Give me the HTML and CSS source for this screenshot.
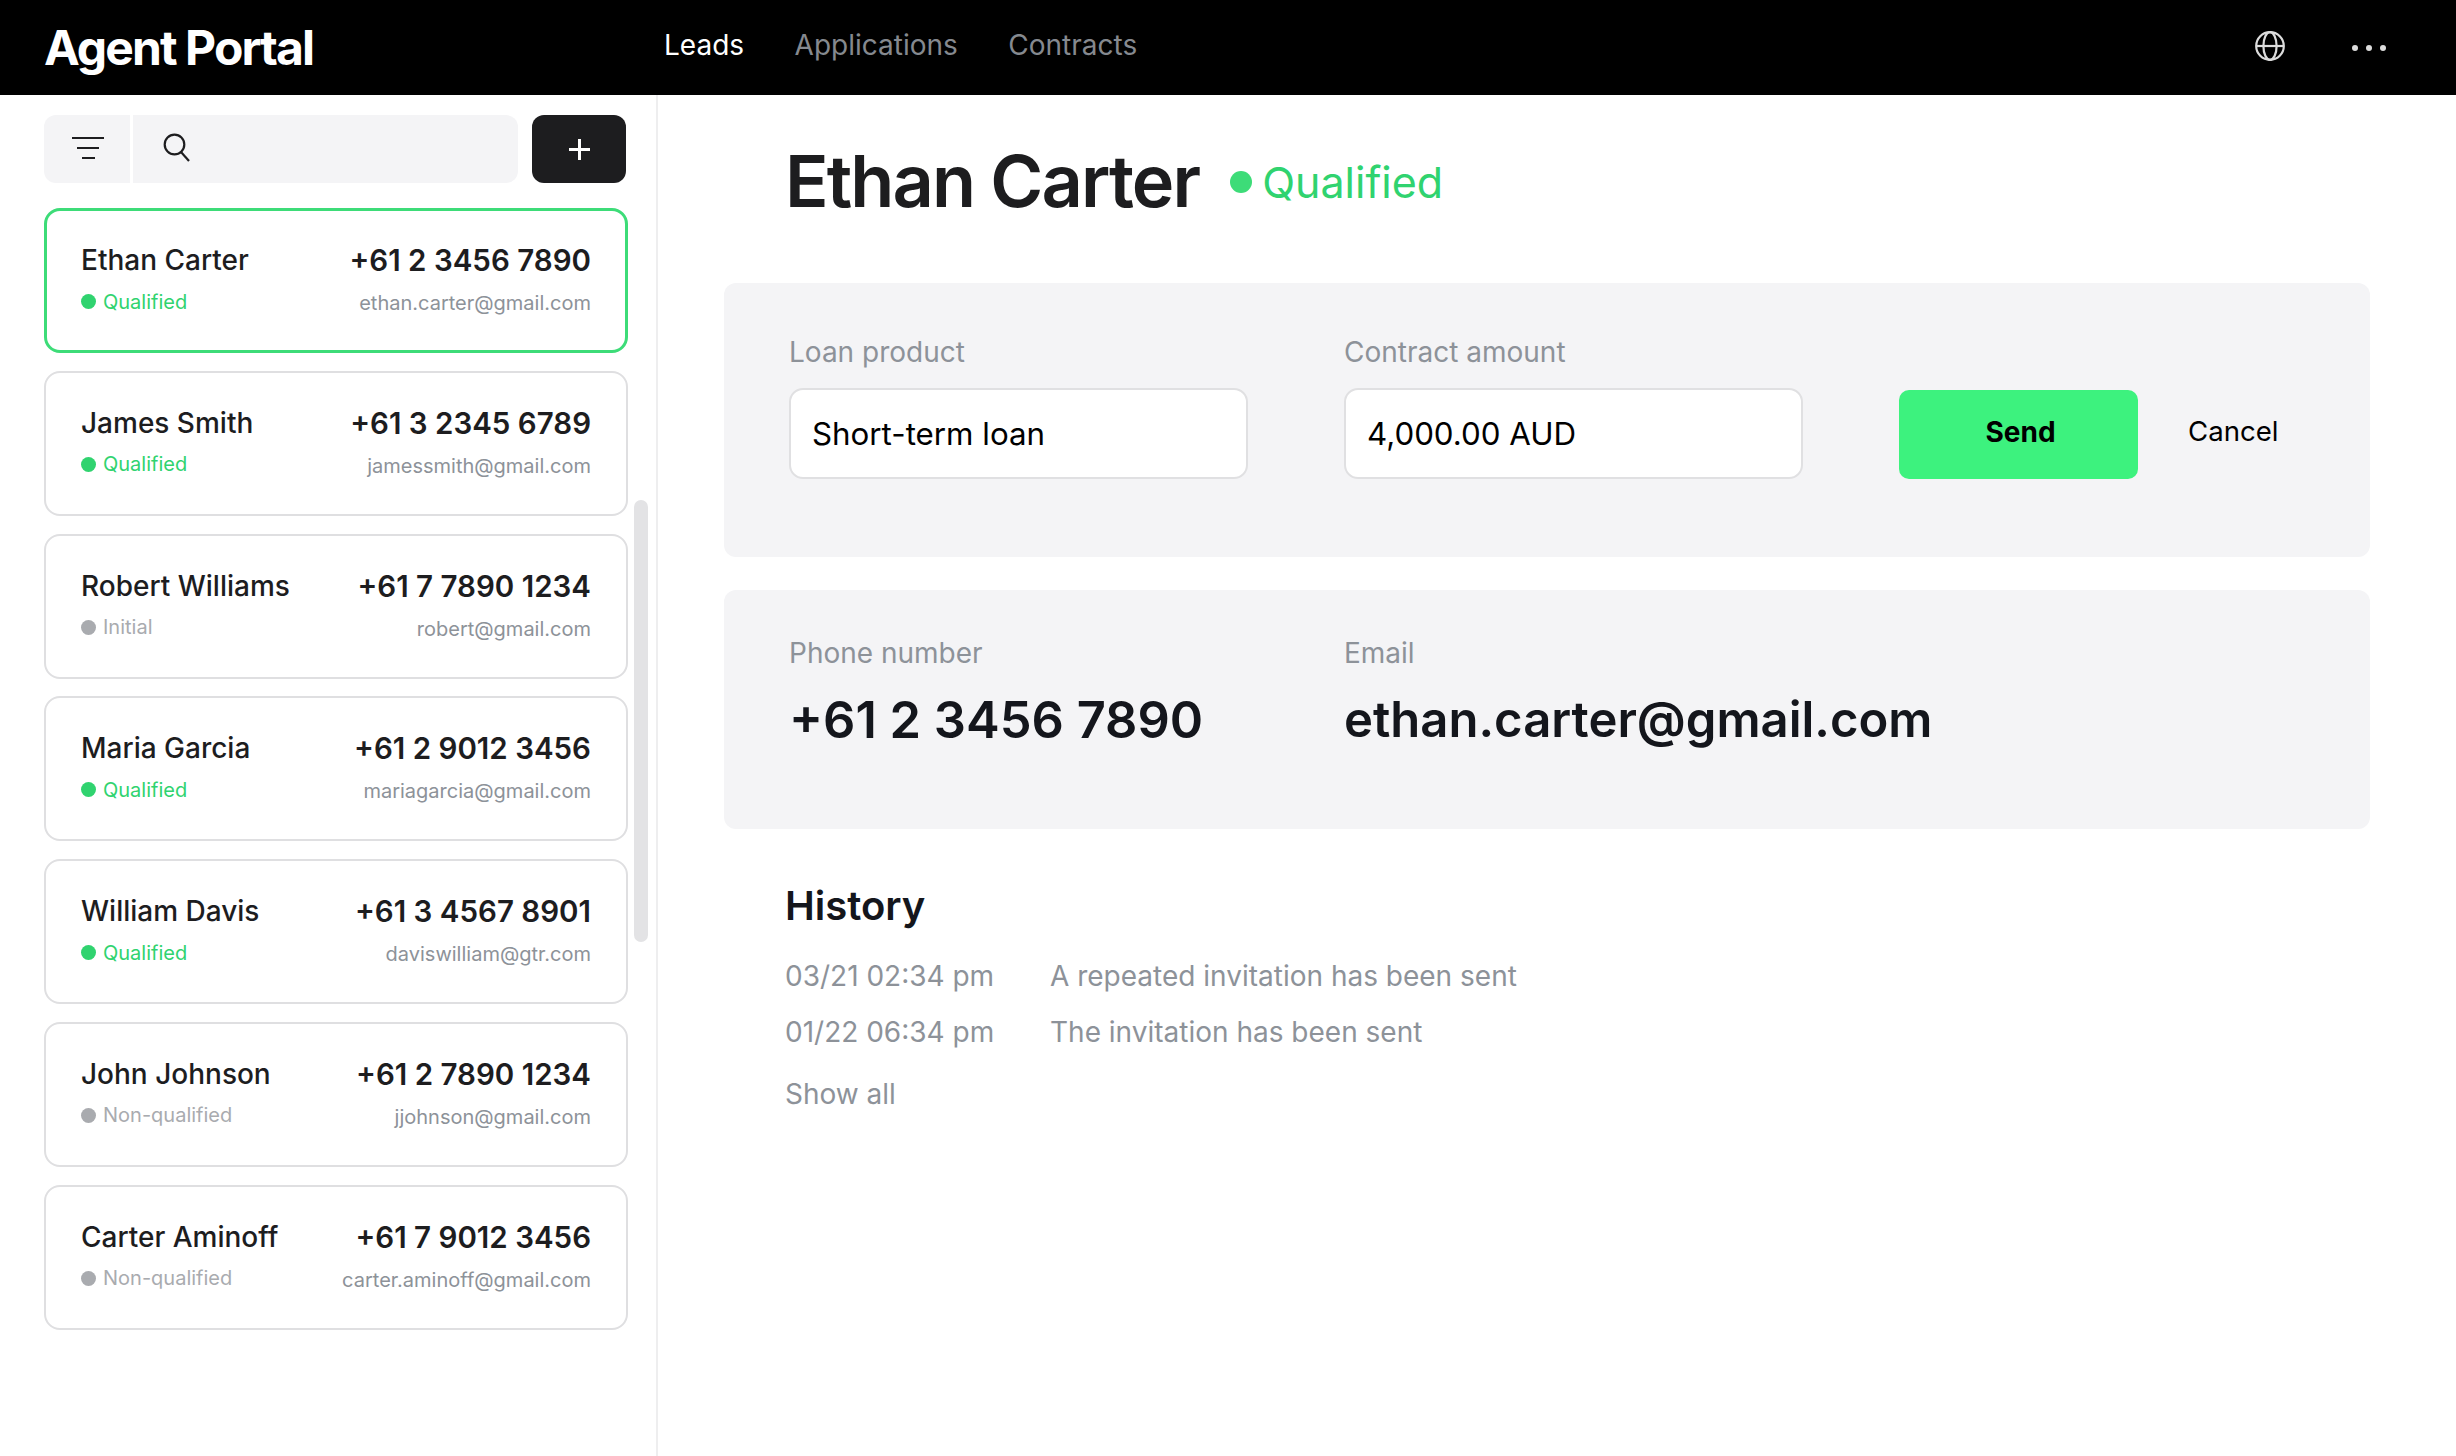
FILE: index.html
```html
<!DOCTYPE html>
<html>
    <head>
        <meta charset="utf-8">
        <title>Agent Portal</title>
        <link rel="stylesheet" href="styles.css">
    </head>
    <body>
    <header class="topbar">
        <div class="logo">Agent Portal</div>
        <nav class="nav">
            <a class="nav-item active">Leads</a>
            <a class="nav-item">Applications</a>
            <a class="nav-item">Contracts</a>
        </nav>
        <div class="top-icons">
            <svg class="globe" width="30" height="30" viewBox="0 0 30 30" fill="none" stroke="#dcdcdc" stroke-width="2.2">
                <circle cx="15" cy="15" r="13.8"/>
                <ellipse cx="15" cy="15" rx="6.6" ry="13.8"/>
                <path d="M1 15h28"/>
            </svg>
            <div class="dots"><span></span><span></span><span></span></div>
        </div>
    </header>
    <div class="layout">
        <aside class="sidebar">
            <div class="tools">
                <button class="filter">
                    <svg class="tool-icon" width="32" height="24" viewBox="0 0 32 24" fill="none" stroke="#1d1d1f" stroke-width="2.2">
                        <path d="M0 2h32M5 12h22M10 22h13"/>
                    </svg>
                </button>
                <div class="search">
                    <svg class="tool-icon" width="28" height="30" viewBox="0 0 28 30" fill="none" stroke="#1d1d1f" stroke-width="2.2">
                        <circle cx="11.5" cy="11.5" r="9.8"/>
                        <path d="M18 19l8 9"/>
                    </svg>
                </div>
                <button class="add">
                    <svg width="21" height="21" viewBox="0 0 21 21" fill="none" stroke="#fff" stroke-width="3">
                        <path d="M10.5 0v21M0 10.5h21"/>
                    </svg>
                </button>
            </div>
            <div class="cards">
                <div class="card selected">
                    <div class="row"><span class="name">Ethan Carter</span><span class="phone">+61 2 3456 7890</span></div>
                    <div class="row row2"><span class="state green">Qualified</span><span class="mail">ethan.carter@gmail.com</span></div>
                </div>
                <div class="card">
                    <div class="row"><span class="name">James Smith</span><span class="phone">+61 3 2345 6789</span></div>
                    <div class="row row2"><span class="state green">Qualified</span><span class="mail">jamessmith@gmail.com</span></div>
                </div>
                <div class="card">
                    <div class="row"><span class="name">Robert Williams</span><span class="phone">+61 7 7890 1234</span></div>
                    <div class="row row2"><span class="state grey">Initial</span><span class="mail">robert@gmail.com</span></div>
                </div>
                <div class="card">
                    <div class="row"><span class="name">Maria Garcia</span><span class="phone">+61 2 9012 3456</span></div>
                    <div class="row row2"><span class="state green">Qualified</span><span class="mail">mariagarcia@gmail.com</span></div>
                </div>
                <div class="card">
                    <div class="row"><span class="name">William Davis</span><span class="phone">+61 3 4567 8901</span></div>
                    <div class="row row2"><span class="state green">Qualified</span><span class="mail">daviswilliam@gtr.com</span></div>
                </div>
                <div class="card">
                    <div class="row"><span class="name">John Johnson</span><span class="phone">+61 2 7890 1234</span></div>
                    <div class="row row2"><span class="state grey">Non-qualified</span><span class="mail">jjohnson@gmail.com</span></div>
                </div>
                <div class="card">
                    <div class="row"><span class="name">Carter Aminoff</span><span class="phone">+61 7 9012 3456</span></div>
                    <div class="row row2"><span class="state grey">Non-qualified</span><span class="mail">carter.aminoff@gmail.com</span></div>
                </div>
            </div>
            <div class="scroll-thumb"></div>
        </aside>
        <main class="main">
            <div class="title">
                <h1>Ethan Carter</h1>
                <span class="title-state">Qualified</span>
            </div>
            <section class="panel form-panel">
                <div class="field">
                    <div class="label">Loan product</div>
                    <div class="input">Short-term loan</div>
                </div>
                <div class="field">
                    <div class="label">Contract amount</div>
                    <div class="input">4,000.00 AUD</div>
                </div>
                <button class="send">Send</button>
                <a class="cancel">Cancel</a>
            </section>
            <section class="panel info-panel">
                <div class="info">
                    <div class="label">Phone number</div>
                    <div class="value phone-value">+61 2 3456 7890</div>
                </div>
                <div class="info">
                    <div class="label">Email</div>
                    <div class="value">ethan.carter@gmail.com</div>
                </div>
            </section>
            <section class="history">
                <h2>History</h2>
                <div class="event"><span class="time">03/21 02:34 pm</span><span>A repeated invitation has been sent</span></div>
                <div class="event"><span class="time">01/22 06:34 pm</span><span>The invitation has been sent</span></div>
                <a class="show-all">Show all</a>
            </section>
        </main>
    </div>
    </body>
</html>
```

FILE: styles.css
```css
*{
    box-sizing: border-box;
}
body{
    margin: 0;
    height: 1456px;
    overflow: hidden;
    background: #fff;
    color: #1d1d1f;
    font-family: Inter, "Liberation Sans", sans-serif;
}
.topbar{
    height: 95px;
    background: #000;
    display: flex;
    align-items: center;
    padding: 0 44px;
}
.logo{
    width: 620px;
    color: #fff;
    font-size: 48px;
    font-weight: 700;
    letter-spacing: -1.9px;
}
.nav{
    display: flex;
    gap: 50.5px;
    margin-top: -6px;
}
.nav-item{
    color: #85898f;
    font-size: 28px;
}
.nav-item.active{
    color: #fff;
}
.top-icons{
    margin-left: auto;
    display: flex;
    align-items: center;
    gap: 67px;
    padding-right: 26px;
}
.globe{
    display: block;
    margin-top: -4px;
}
.dots{
    display: flex;
    gap: 8px;
}
.dots span{
    width: 6px;
    height: 6px;
    border-radius: 50%;
    background: #dcdcdc;
}
.layout{
    display: flex;
    height: 1361px;
}
.sidebar{
    position: relative;
    width: 658px;
    flex-shrink: 0;
    border-right: 2px solid #eeeeef;
    padding: 20px 0 0 44px;
}
.tools{
    display: flex;
    width: 583px;
    height: 68px;
}
.tool-icon{
    margin-bottom: 3px;
}
.filter{
    width: 86px;
    border: 0;
    background: #f4f4f6;
    border-radius: 12px 0 0 12px;
    padding: 0 0 0 2px;
    display: flex;
    align-items: center;
    justify-content: center;
}
.search{
    width: 385px;
    margin-left: 3px;
    background: #f4f4f6;
    border-radius: 0 12px 12px 0;
    padding: 0 0 0 30px;
    display: flex;
    align-items: center;
}
.add{
    width: 94px;
    margin-left: 14px;
    border: 0;
    background: #1d1d1f;
    border-radius: 12px;
    padding: 0;
    display: flex;
    align-items: center;
    justify-content: center;
}
.cards{
    width: 584px;
    margin-top: 25px;
    display: flex;
    flex-direction: column;
    gap: 17.75px;
}
.card{
    height: 145px;
    border: 2px solid #dfdfe1;
    border-radius: 16px;
    padding: 32px 35px 0 35px;
}
.card.selected{
    border: 3px solid #3ddc78;
    padding: 31px 34px 0 34px;
}
.row{
    display: flex;
    justify-content: space-between;
    align-items: center;
}
.row2{
    margin-top: 13px;
}
.name{
    font-size: 28px;
    font-weight: 500;
}
.phone{
    font-size: 29.5px;
    font-weight: 600;
}
.mail{
    font-size: 20px;
    color: #8d9299;
}
.state{
    font-size: 20px;
    display: flex;
    align-items: center;
    gap: 7px;
    margin-top: -3px;
}
.state::before{
    content: "";
    width: 15px;
    height: 15px;
    border-radius: 50%;
    background: currentColor;
}
.green{
    color: #30d36f;
}
.grey{
    color: #a9abaf;
}
.scroll-thumb{
    position: absolute;
    left: 634px;
    top: 405px;
    width: 14px;
    height: 442px;
    border-radius: 7px;
    background: #e3e3e5;
}
.main{
    flex: 1;
    padding: 0 86px 0 66px;
}
.title{
    height: 188px;
    padding: 0 0 18px 61px;
    display: flex;
    align-items: center;
}
h1{
    margin: 0;
    font-size: 72px;
    font-weight: 600;
    letter-spacing: -1.9px;
    color: #1d1d1f;
}
.title-state{
    margin: 3px 0 0 31px;
    font-size: 43px;
    color: #30d36f;
    display: flex;
    align-items: center;
    gap: 10px;
}
.title-state::before{
    content: "";
    width: 22px;
    height: 22px;
    border-radius: 50%;
    background: #3ddc78;
}
.panel{
    background: #f4f4f6;
    border-radius: 12px;
    display: flex;
    padding-left: 65px;
}
.form-panel{
    height: 274px;
    padding-top: 52px;
}
.field{
    width: 459px;
    margin-right: 96px;
}
.label{
    font-size: 28px;
    color: #8d9299;
}
.input{
    height: 91px;
    margin-top: 19px;
    background: #fff;
    border: 2px solid #e0e0e2;
    border-radius: 14px;
    padding: 0 0 0 21px;
    display: flex;
    align-items: center;
    font-size: 31.3px;
    color: #000;
}
.send{
    width: 239px;
    height: 89px;
    margin-top: 55px;
    border: 0;
    border-radius: 10px;
    padding: 0 0 5px 4px;
    background: #3df27e;
    color: #000;
    font-family: inherit;
    font-size: 28px;
    font-weight: 700;
}
.cancel{
    margin: 79px 0 0 50px;
    font-size: 27.6px;
    color: #000;
}
.info-panel{
    height: 239px;
    margin-top: 33px;
    padding-top: 46px;
}
.info{
    width: 555px;
}
.value{
    margin-top: 20px;
    font-size: 49px;
    font-weight: 600;
    line-height: 60px;
    color: #14161c;
}
.phone-value{
    font-size: 50.6px;
}
.history{
    padding: 52px 0 0 61px;
}
h2{
    margin: 0 0 18px;
    font-size: 40px;
    font-weight: 600;
    color: #14161c;
}
.event{
    display: flex;
    height: 56px;
    align-items: center;
    font-size: 28px;
    color: #8d9299;
}
.time{
    width: 265px;
}
.show-all{
    display: block;
    margin-top: 17px;
    font-size: 28px;
    color: #8d9299;
}
```
